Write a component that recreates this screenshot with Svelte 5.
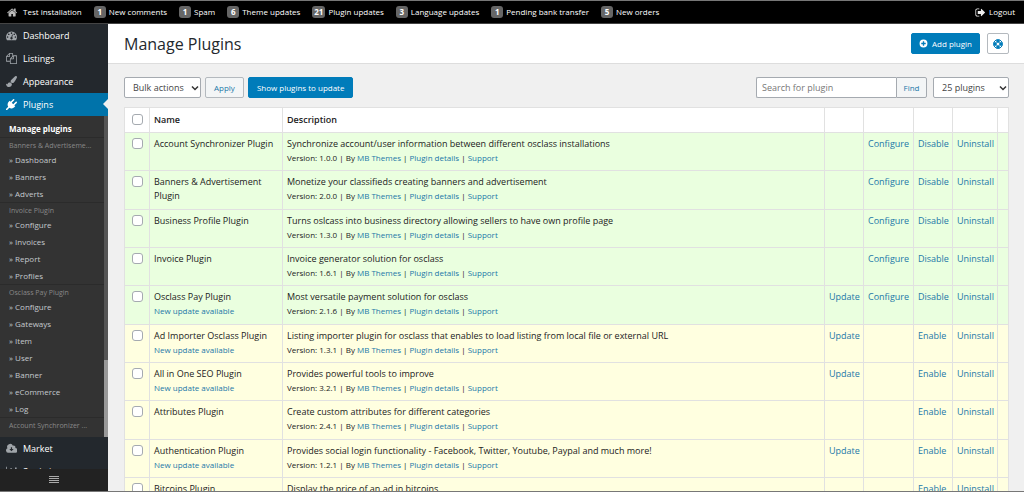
<script>
  const notices = [
    [1, 'New comments'],
    [1, 'Spam'],
    [6, 'Theme updates'],
    [21, 'Plugin updates'],
    [3, 'Language updates'],
    [1, 'Pending bank transfer'],
    [5, 'New orders'],
  ];

  const icons = {
    home: 'M1408 992v480q0 26-19 45t-45 19h-384v-384h-256v384h-384q-26 0-45-19t-19-45v-480q0-1 .5-3t.5-3l575-474 575 474q1 2 1 6zm223-69l-62 74q-8 9-21 11h-3q-13 0-21-7l-692-577-692 577q-12 8-24 7-13-2-21-11l-62-74q-8-10-7-23.5t11-21.5l719-599q32-26 76-26t76 26l244 204v-195q0-14 9-23t23-9h192q14 0 23 9t9 23v408l219 182q10 8 11 21.5t-7 23.5z',
    dashboard: 'M384 1152q0-53-37.5-90.5t-90.5-37.5-90.5 37.5-37.5 90.5 37.5 90.5 90.5 37.5 90.5-37.5 37.5-90.5zm192-448q0-53-37.5-90.5t-90.5-37.5-90.5 37.5-37.5 90.5 37.5 90.5 90.5 37.5 90.5-37.5 37.5-90.5zm428 481l101-382q6-26-7.5-48.5t-38.5-29.5-48 6.5-30 39.5l-101 382q-60 5-107 43.5t-63 98.5q-20 77 20 146t117 89 146-20 89-117q16-60-6-117t-72-91zm660-33q0-53-37.5-90.5t-90.5-37.5-90.5 37.5-37.5 90.5 37.5 90.5 90.5 37.5 90.5-37.5 37.5-90.5zm-640-640q0-53-37.5-90.5t-90.5-37.5-90.5 37.5-37.5 90.5 37.5 90.5 90.5 37.5 90.5-37.5 37.5-90.5zm448 192q0-53-37.5-90.5t-90.5-37.5-90.5 37.5-37.5 90.5 37.5 90.5 90.5 37.5 90.5-37.5 37.5-90.5zm320 448q0 261-141 483-19 29-54 29h-1402q-35 0-54-29-141-221-141-483 0-182 71-348t191-286 286-191 348-71 348 71 286 191 191 286 71 348z',
    listings: 'M1696 384q40 0 68 28t28 68v1216q0 40-28 68t-68 28h-960q-40 0-68-28t-28-68v-288h-544q-40 0-68-28t-28-68v-672q0-40 20-88t48-76l408-408q28-28 76-48t88-20h416q40 0 68 28t28 68v328q68-40 128-40h416zm-544 213l-299 299h299v-299zm-640-384l-299 299h299v-299zm196 647l316-316v-416h-384v416q0 40-28 68t-68 28h-416v640h512v-256q0-40 20-88t48-76zm956 804v-1152h-384v416q0 40-28 68t-68 28h-416v640h896z',
    brush: 'M1615 0q70 0 122.5 46.5t52.5 116.5q0 63-45 151-332 629-465 752-97 91-218 91-126 0-216.5-92.5t-90.5-219.5q0-128 92-212l638-579q59-54 130-54zm-909 1034q39 76 106.5 130t150.5 76l1 71q4 213-129.5 347t-348.5 134q-123 0-218-46.5t-152.5-127.5-86.5-183-29-220q7 5 41 30t62 44.5 59 36.5 46 17q41 0 55-37 25-66 57.5-112.5t69.5-76 88-47.5 103-25.5 125-10.5z',
    plug: 'M1755 453q37 38 37 90.5t-37 90.5l-401 400 150 150-160 160q-163 163-389.5 186.5t-411.5-100.5l-362 362h-181v-181l362-362q-124-185-100.5-411.5t186.5-389.5l160-160 150 150 400-401q38-37 91-37t90 37 37 90.5-37 90.5l-400 401 234 234 401-400q38-37 91-37t90 37z',
    signout: 'M704 1440q0 4 1 20t.5 26.5-3 23.5-10 19.5-20.5 6.5h-320q-119 0-203.5-84.5t-84.5-203.5v-704q0-119 84.5-203.5t203.5-84.5h320q13 0 22.5 9.5t9.5 22.5q0 4 1 20t.5 26.5-3 23.5-10 19.5-20.5 6.5h-320q-66 0-113 47t-47 113v704q0 66 47 113t113 47h312l11.5 1 11.5 3 8 5.5 7 9 2 13.5zm928-544q0 26-19 45l-544 544q-19 19-45 19t-45-19-19-45v-288h-448q-26 0-45-19t-19-45v-384q0-26 19-45t45-19h448v-288q0-26 19-45t45-19 45 19l544 544q19 19 19 45z',
    cloud: 'M400 1600A400 400 0 0 1 230 840A480 480 0 0 1 1130 440A290 290 0 0 1 1520 800A400 400 0 0 1 1400 1600ZM790 700V980H540L890 1340L1240 980H990V700Z',
    chart: 'M0 128H128V1536H1792V1664H0ZM320 896H576V1408H320ZM704 384H960V1408H704ZM1088 640H1344V1408H1088ZM1472 256H1728V1408H1472Z',
  };

  const menu = [
    ['dashboard', 'Dashboard'],
    ['listings', 'Listings'],
    ['brush', 'Appearance'],
    ['plug', 'Plugins'],
  ];

  const groups = [
    { title: 'Banners & Advertiseme...', items: ['Dashboard', 'Banners', 'Adverts'] },
    { title: 'Invoice Plugin', items: ['Configure', 'Invoices', 'Report', 'Profiles'] },
    { title: 'Osclass Pay Plugin', items: ['Configure', 'Gateways', 'Item', 'User', 'Banner', 'eCommerce', 'Log'] },
    { title: 'Account Synchronizer ...', items: ['Configure'] },
  ];

  const plugins = [
    { name: 'Account Synchronizer Plugin', text: 'Synchronize account/user information between different osclass installations', version: '1.0.0', on: true },
    { name: 'Banners & Advertisement Plugin', text: 'Monetize your classifieds creating banners and advertisement', version: '2.0.0', on: true },
    { name: 'Business Profile Plugin', text: 'Turns oslcass into business directory allowing sellers to have own profile page', version: '1.3.0', on: true },
    { name: 'Invoice Plugin', text: 'Invoice generator solution for osclass', version: '1.6.1', on: true },
    { name: 'Osclass Pay Plugin', text: 'Most versatile payment solution for osclass', version: '2.1.6', on: true, update: true },
    { name: 'Ad Importer Osclass Plugin', text: 'Listing importer plugin for osclass that enables to load listing from local file or external URL', version: '1.3.1', update: true },
    { name: 'All in One SEO Plugin', text: 'Provides powerful tools to improve', version: '3.2.1', update: true },
    { name: 'Attributes Plugin', text: 'Create custom attributes for different categories', version: '2.4.1' },
    { name: 'Authentication Plugin', text: 'Provides social login functionality - Facebook, Twitter, Youtube, Paypal and much more!', version: '1.2.1', update: true },
    { name: 'Bitcoins Plugin', text: 'Display the price of an ad in bitcoins', version: '1.0.0' },
  ];
</script>

{#snippet icon(name)}
  <svg class="icon" viewBox="0 0 1792 1792" aria-hidden="true"><path fill-rule="evenodd" d={icons[name]} /></svg>
{/snippet}

{#snippet chevron()}
  <svg class="chevron" viewBox="0 0 8 8" aria-hidden="true"><path d="M1 2.5 4 5.5 7 2.5" /></svg>
{/snippet}

<div class="page">
  <header class="topbar">
    <a href="#home">{@render icon('home')}Test installation</a>
    {#each notices as [count, label]}
      <a href="#notice"><b class="badge">{count}</b>{label}</a>
    {/each}
    <a class="logout" href="#logout">{@render icon('signout')}Logout</a>
  </header>

  <div class="body">
    <aside>
      <nav class="menu">
        {#each menu as [name, label]}
          <a href="#menu" class:active={label === 'Plugins'}>{@render icon(name)}{label}</a>
        {/each}
      </nav>
      <div class="submenu">
        <nav class="links">
          <a class="current" href="#plugins">Manage plugins</a>
          {#each groups as group}
            <h2>{group.title}</h2>
            {#each group.items as item}
              <a href="#item">» {item}</a>
            {/each}
          {/each}
        </nav>
        <div class="track"><div class="thumb"></div></div>
      </div>
      <nav class="menu rest">
        <a href="#market">{@render icon('cloud')}Market</a>
        <a href="#statistics">{@render icon('chart')}Statistics</a>
      </nav>
      <button class="collapse" aria-label="Collapse menu">
        <svg viewBox="0 0 10 8" aria-hidden="true"><path d="M0 .5H10M0 2.5H10M0 4.5H10M0 6.5H10" /></svg>
      </button>
    </aside>

    <main>
      <div class="heading">
        <h1>Manage Plugins</h1>
        <button class="btn primary">
          <svg class="round" viewBox="0 0 16 16" aria-hidden="true"><path fill-rule="evenodd" d="M8 1A7 7 0 1 1 8 15A7 7 0 1 1 8 1ZM6.8 4V6.8H4V9.2H6.8V12H9.2V9.2H12V6.8H9.2V4Z" /></svg>
          Add plugin
        </button>
        <button class="btn help" aria-label="Help">
          <svg class="ring" viewBox="0 0 16 16" aria-hidden="true">
            <circle cx="8" cy="8" r="7" stroke-width="1.6" />
            <circle cx="8" cy="8" r="3" stroke-width="1.4" />
            <path d="M8 1V5M8 11V15M1 8H5M11 8H15" stroke-width="5.4" />
          </svg>
        </button>
      </div>

      <div class="content">
        <form class="tools">
          <div class="select bulk">
            <select aria-label="Bulk actions"><option>Bulk actions</option></select>
            {@render chevron()}
          </div>
          <button type="button" class="btn">Apply</button>
          <button type="button" class="btn primary">Show plugins to update</button>
          <div class="search">
            <input type="text" placeholder="Search for plugin" aria-label="Search for plugin" />
            <button type="button" class="btn">Find</button>
          </div>
          <div class="select count">
            <select aria-label="Plugins per page"><option>25 plugins</option></select>
            {@render chevron()}
          </div>
        </form>

        <table>
          <colgroup>
            <col class="c-check" /><col class="c-name" /><col />
            <col class="c-short" /><col class="c-conf" /><col class="c-short" /><col class="c-un" /><col class="c-end" />
          </colgroup>
          <thead>
            <tr>
              <th><input type="checkbox" aria-label="Select all plugins" /></th>
              <th>Name</th>
              <th>Description</th>
              <th></th><th></th><th></th><th></th><th></th>
            </tr>
          </thead>
          <tbody>
            {#each plugins as p}
              <tr class:on={p.on}>
                <td><input type="checkbox" aria-label={p.name} /></td>
                <td>
                  {p.name}
                  {#if p.update}<div class="meta"><a href="#update">New update available</a></div>{/if}
                </td>
                <td>
                  {p.text}
                  <div class="meta">
                    Version: {p.version} | By <a href="#author">MB Themes</a> | <a href="#details">Plugin details</a> | <a href="#support">Support</a>
                  </div>
                </td>
                <td>{#if p.update}<a href="#update">Update</a>{/if}</td>
                <td>{#if p.on}<a href="#configure">Configure</a>{/if}</td>
                <td><a href="#toggle">{p.on ? 'Disable' : 'Enable'}</a></td>
                <td><a href="#uninstall">Uninstall</a></td>
                <td></td>
              </tr>
            {/each}
          </tbody>
        </table>
      </div>
    </main>
  </div>
</div>

<style>
  :global(body) {
    margin: 0;
    background: #f0f0f0;
  }
  .page,
  .page :global(*) {
    box-sizing: border-box;
  }
  .page {
    height: 100vh;
    display: flex;
    flex-direction: column;
    overflow: hidden;
    border-top: 1px solid #777;
    border-bottom: 1px solid #777;
    font: 9px/14px 'Segoe UI', 'Open Sans', 'Noto Sans', sans-serif;
    color: #222;
  }
  a {
    color: #1c78a8;
    text-decoration: none;
    white-space: nowrap;
  }
  button,
  input,
  select {
    font: inherit;
    margin: 0;
  }
  .icon {
    width: 11px;
    height: 11px;
    flex: none;
    fill: currentColor;
  }

  .topbar {
    flex: none;
    height: 23px;
    display: flex;
    align-items: center;
    gap: 12px;
    padding: 0 9px 0 7px;
    background: #000;
    border-bottom: 1px solid #444;
    font-size: 8px;
  }
  .topbar a {
    display: flex;
    align-items: center;
    gap: 3px;
    color: #fff;
  }
  .topbar .icon {
    color: #bbb;
    margin-right: 2px;
  }
  .topbar .logout {
    margin-left: auto;
  }
  .topbar .logout .icon {
    color: #eee;
    margin-right: 0;
  }
  .badge {
    min-width: 12px;
    padding: 0 2px;
    border-radius: 3px;
    background: #666;
    line-height: 12px;
    text-align: center;
  }

  .body {
    flex: 1;
    min-height: 0;
    display: flex;
  }
  aside {
    width: 108px;
    flex: none;
    display: flex;
    flex-direction: column;
    background: #23282d;
  }
  .menu a {
    position: relative;
    display: flex;
    align-items: center;
    gap: 6px;
    height: 23px;
    padding-left: 6px;
    color: #fff;
  }
  .menu .icon {
    color: #a0a5aa;
  }
  .menu .active {
    background: #0073aa;
  }
  .menu .active .icon {
    color: #fff;
  }
  .active::after {
    content: '';
    position: absolute;
    right: 0;
    top: 6px;
    border: 5px solid transparent;
    border-left-width: 0;
    border-right-color: #f0f0f0;
  }
  .submenu {
    flex: 1;
    min-height: 0;
    display: flex;
    background: #333;
  }
  .links {
    flex: 1;
    min-width: 0;
    overflow: hidden;
    padding-top: 4px;
    font-size: 8px;
  }
  .links a {
    display: block;
    padding-left: 9px;
    line-height: 17px;
    color: #c4c9ce;
  }
  .links .current {
    color: #fff;
    font-weight: 700;
  }
  h2 {
    margin: 0;
    padding: 2px 0 0 9px;
    border-top: 1px solid #2b2b2b;
    font-size: 7px;
    line-height: 11px;
    font-weight: 400;
    color: #888;
    white-space: nowrap;
  }
  .track {
    width: 4px;
    display: flex;
    flex-direction: column;
    justify-content: flex-end;
    background: #555;
  }
  .thumb {
    height: 24%;
    background: #999;
  }
  .rest {
    flex: none;
    height: 32px;
    overflow: hidden;
  }
  .collapse {
    flex: none;
    height: 22px;
    padding: 0;
    border: 0;
    display: grid;
    place-items: center;
    background: #222;
  }
  .collapse svg {
    width: 10px;
    height: 8px;
    stroke: #aaa;
  }

  main {
    flex: 1;
    min-width: 0;
  }
  .heading {
    height: 40px;
    display: flex;
    align-items: center;
    gap: 7px;
    padding: 0 15px 0 16px;
    background: #fff;
    border-bottom: 1px solid #ddd;
  }
  h1 {
    flex: 1;
    margin: 0;
    font-size: 16px;
    line-height: 22px;
    font-weight: 400;
    color: #23282d;
  }
  .btn {
    height: 21px;
    display: flex;
    align-items: center;
    gap: 4px;
    padding: 0 7px;
    border: 1px solid #b4b9be;
    border-radius: 2px;
    background: #f3f5f6;
    color: #1c78a8;
    font-size: 8px;
    white-space: nowrap;
  }
  .primary {
    background: #007cba;
    border-color: #007cba;
    color: #fff;
  }
  .round {
    width: 9px;
    height: 9px;
    fill: currentColor;
  }
  .ring {
    width: 10px;
    height: 10px;
    fill: none;
    stroke: currentColor;
  }
  .help {
    width: 22px;
    padding: 0;
    justify-content: center;
    background: #fff;
    color: #007cba;
  }
  .content {
    padding: 13px 15px 0 16px;
  }
  .tools {
    display: flex;
    gap: 4px;
    margin-bottom: 9px;
  }
  .tools .btn {
    padding: 0 8px;
  }
  .select {
    position: relative;
  }
  .select select {
    appearance: none;
    width: 100%;
    height: 21px;
    padding: 0 10px 0 8px;
    border: 1px solid #a5aab0;
    border-radius: 2px;
    background: #fff;
    color: #444;
  }
  .bulk {
    width: 77px;
  }
  .count {
    width: 76px;
    margin-left: 2px;
  }
  .chevron {
    position: absolute;
    right: 2px;
    top: 7px;
    width: 8px;
    height: 8px;
    fill: none;
    stroke: #333;
    stroke-width: 1.5;
    pointer-events: none;
  }
  .search {
    display: flex;
    margin-left: auto;
  }
  .search input {
    width: 140px;
    height: 21px;
    padding: 0 5px;
    border: 1px solid #a5aab0;
    border-right: 0;
    border-radius: 2px 0 0 2px;
    background: #fff;
    color: #333;
  }
  .search input::placeholder {
    color: #777;
  }
  .tools .search .btn {
    width: 31px;
    padding: 0;
    justify-content: center;
    border-color: #a5aab0;
    border-radius: 0 2px 2px 0;
  }

  table {
    width: 100%;
    table-layout: fixed;
    border-spacing: 0;
    border: solid #e1e1e1;
    border-width: 1px 0 0 1px;
    background: #fff;
  }
  .c-check { width: 25px; }
  .c-name { width: 133px; }
  .c-short { width: 39px; }
  .c-conf { width: 50px; }
  .c-un { width: 45px; }
  .c-end { width: 11px; }
  th,
  td {
    padding: 4px 4px 0;
    border: solid #e1e1e1;
    border-width: 0 1px 1px 0;
    text-align: left;
    vertical-align: top;
  }
  th {
    height: 25px;
    padding-top: 5px;
    font-weight: 600;
  }
  td {
    height: 38px;
    background: #ffffe0;
  }
  tr:nth-child(3n + 2) td {
    height: 39px;
  }
  .on td {
    background: #eaffdf;
  }
  th:first-child,
  td:first-child {
    padding-left: 7px;
  }
  .meta {
    font-size: 8px;
  }
  input[type='checkbox'] {
    appearance: none;
    display: block;
    width: 11px;
    height: 11px;
    margin-top: 1px;
    border: 1px solid #a5aab0;
    border-radius: 3px;
    background: #fff;
  }
</style>
